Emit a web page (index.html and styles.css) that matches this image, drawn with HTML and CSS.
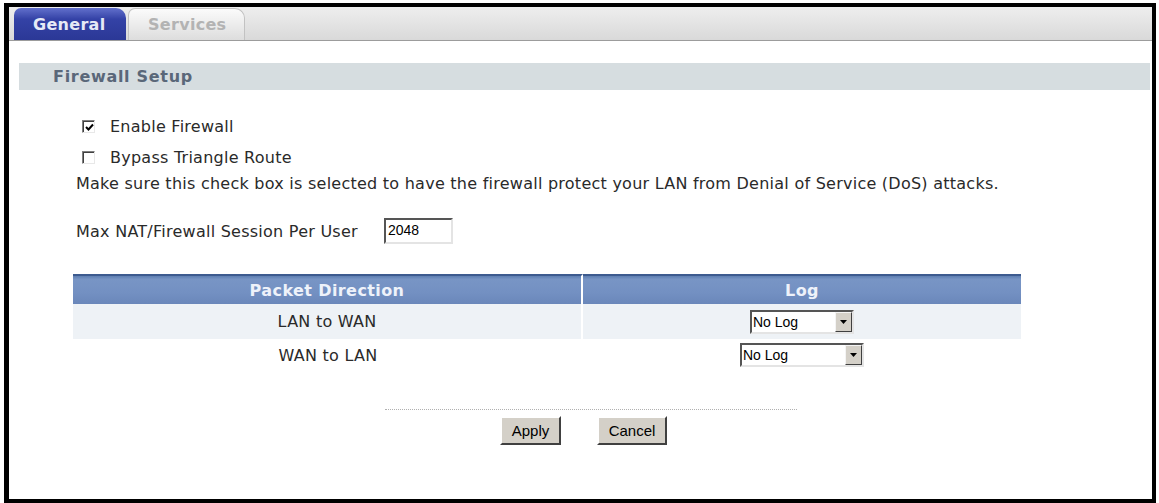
FILE: index.html
```html
<!DOCTYPE html>
<html>
<head>
<meta charset="utf-8">
<link rel="stylesheet" href="styles.css">
</head>
<body>
<div class="frame">
  <div class="tabbar">
    <div class="tab tab-active">General</div>
    <div class="tab tab-idle">Services</div>
  </div>
  <div class="content">
    <div class="section-title">Firewall Setup</div>
    <div class="form">
      <div class="check-row">
        <span class="cb"><svg width="9" height="9" viewBox="0 0 9 9"><path d="M1 4 L3.5 6.5 L8 1.5" fill="none" stroke="#000" stroke-width="2"/></svg></span>
        <span class="check-label">Enable Firewall</span>
      </div>
      <div class="check-row">
        <span class="cb"></span>
        <span class="check-label">Bypass Triangle Route</span>
      </div>
      <p class="note">Make sure this check box is selected to have the firewall protect your LAN from Denial of Service (DoS) attacks.</p>
      <div class="field-row">
        <span class="field-label">Max NAT/Firewall Session Per User</span>
        <span class="textbox">2048</span>
      </div>
    </div>
    <table class="log-table">
      <thead>
        <tr><th class="col-dir">Packet Direction</th><th>Log</th></tr>
      </thead>
      <tbody>
        <tr class="row-alt">
          <td class="col-dir">LAN to WAN</td>
          <td><span class="select select-narrow"><span class="select-value">No Log</span><span class="select-btn"><svg width="7" height="4" viewBox="0 0 7 4"><path d="M0 0 H7 L3.5 4 Z" fill="#000"/></svg></span></span></td>
        </tr>
        <tr>
          <td class="col-dir">WAN to LAN</td>
          <td><span class="select select-wide"><span class="select-value">No Log</span><span class="select-btn"><svg width="7" height="4" viewBox="0 0 7 4"><path d="M0 0 H7 L3.5 4 Z" fill="#000"/></svg></span></span></td>
        </tr>
      </tbody>
    </table>
    <div class="actions">
      <div class="rule"></div>
      <div class="buttons">
        <span class="btn btn-apply">Apply</span>
        <span class="btn btn-cancel">Cancel</span>
      </div>
    </div>
  </div>
</div>
</body>
</html>
```

FILE: styles.css
```css
html, body {
  margin: 0;
  padding: 0;
  background: #fff;
}
body {
  font-family: "DejaVu Sans", Verdana, sans-serif;
  font-size: 16px;
  letter-spacing: 0.25px;
  color: #2a2a2a;
}
.frame {
  box-sizing: border-box;
  margin: 3px 3px 0 4px;
  height: 500px;
  border: 4px solid #000;
  border-left-width: 5px;
  background: #fff;
  overflow: hidden;
}
.tabbar {
  height: 33px;
  background: linear-gradient(#eeeeee, #d9d9d9);
  border-bottom: 1px solid #9c9c9c;
  display: flex;
  align-items: flex-end;
  padding-left: 5px;
  gap: 2px;
}
.tab {
  box-sizing: border-box;
  height: 32px;
  display: flex;
  align-items: center;
  font-weight: bold;
  font-size: 16px;
  letter-spacing: 0.3px;
  padding-left: 19px;
  border-radius: 7px 10px 0 0;
}
.tab-active {
  width: 112px;
  background: linear-gradient(#6270cc 0%, #3442a6 35%, #2b3896 100%);
  color: #e6eaf6;
}
.tab-idle {
  width: 117px;
  background: linear-gradient(#fbfbfb, #dddddd);
  border: 1px solid #c2c2c2;
  border-bottom: none;
  color: #b3b3b3;
}
.content {
  padding: 22px 2px 0 10px;
}
.section-title {
  height: 27px;
  background: #d6dde0;
  color: #5a6779;
  font-weight: bold;
  font-size: 16px;
  letter-spacing: 0.7px;
  display: flex;
  align-items: center;
  padding-left: 34px;
}
.form {
  padding-left: 57px;
  padding-top: 21px;
}
.check-row {
  display: flex;
  align-items: center;
  height: 31px;
  padding-left: 6px;
}
.cb {
  box-sizing: border-box;
  width: 13px;
  height: 13px;
  border: 1px solid;
  border-color: #7f7f7f #e8e8e8 #e8e8e8 #7f7f7f;
  box-shadow: inset 1px 1px 0 #404040;
  background: #fff;
  display: flex;
  align-items: center;
  justify-content: center;
  margin-right: 15px;
}
.cb svg {
  display: block;
  margin: 1px 0 0 1px;
}
.note {
  margin: 0;
  height: 22px;
  line-height: 22px;
}
.field-row {
  display: flex;
  align-items: center;
  margin-top: 23px;
}
.field-label {
  width: 308px;
}
.textbox {
  box-sizing: border-box;
  width: 69px;
  height: 26px;
  border: 2px solid;
  border-color: #555 #e4e4e4 #e4e4e4 #555;
  font-family: "Liberation Sans", Arial, sans-serif;
  font-size: 14px;
  letter-spacing: 0;
  padding: 2px 0 0 2px;
  color: #000;
}
.log-table {
  margin: 30px 0 0 54px;
  width: 948px;
  border-collapse: separate;
  border-spacing: 0;
}
.log-table th {
  box-sizing: border-box;
  height: 30px;
  padding: 0;
  background: linear-gradient(#5f7fb2 0, #7895c5 12%, #7390c2 60%, #6a87ba 100%);
  border-top: 2px solid #3d5b8f;
  color: #eef2fa;
  font-weight: bold;
  font-size: 16px;
  letter-spacing: 0.4px;
  text-align: center;
}
.log-table .col-dir {
  width: 508px;
  border-right: 2px solid #fff;
}
.log-table td {
  padding: 0;
  text-align: center;
  height: 32px;
}
.log-table tbody tr:last-child td {
  border-right: none;
}
.log-table .row-alt td {
  background: #eef2f6;
  height: 35px;
}
.select {
  box-sizing: border-box;
  display: inline-flex;
  vertical-align: middle;
  height: 24px;
  border: 2px solid;
  border-color: #555 #e4e4e4 #e4e4e4 #555;
  background: #fff;
  font-family: "Liberation Sans", Arial, sans-serif;
  font-size: 14px;
  letter-spacing: 0;
  color: #000;
  text-align: left;
}
.select-narrow { width: 104px; }
.select-wide { width: 124px; }
.select-value {
  flex: 1;
  display: flex;
  align-items: center;
  padding-left: 1px;
}
.select-btn {
  box-sizing: border-box;
  width: 17px;
  background: #d4d0c8;
  border: 1px solid;
  border-color: #f4f4f4 #404040 #404040 #f4f4f4;
  display: flex;
  align-items: center;
  justify-content: center;
}
.actions {
  display: flex;
  flex-direction: column;
  align-items: flex-start;
  margin-top: 38px;
}
.rule {
  margin-left: 366px;
  width: 412px;
  border-top: 1px dotted #b0b0b0;
}
.buttons {
  display: flex;
  gap: 36px;
  margin: 6px 0 0 481px;
}
.btn {
  box-sizing: border-box;
  height: 29px;
  display: flex;
  align-items: center;
  justify-content: center;
  background: #d4d0c8;
  border: 2px solid;
  border-color: #fff #404040 #404040 #fff;
  font-family: "Liberation Sans", Arial, sans-serif;
  font-size: 15px;
  letter-spacing: 0;
  color: #000;
}
.btn-apply { width: 61px; }
.btn-cancel { width: 70px; }
```
